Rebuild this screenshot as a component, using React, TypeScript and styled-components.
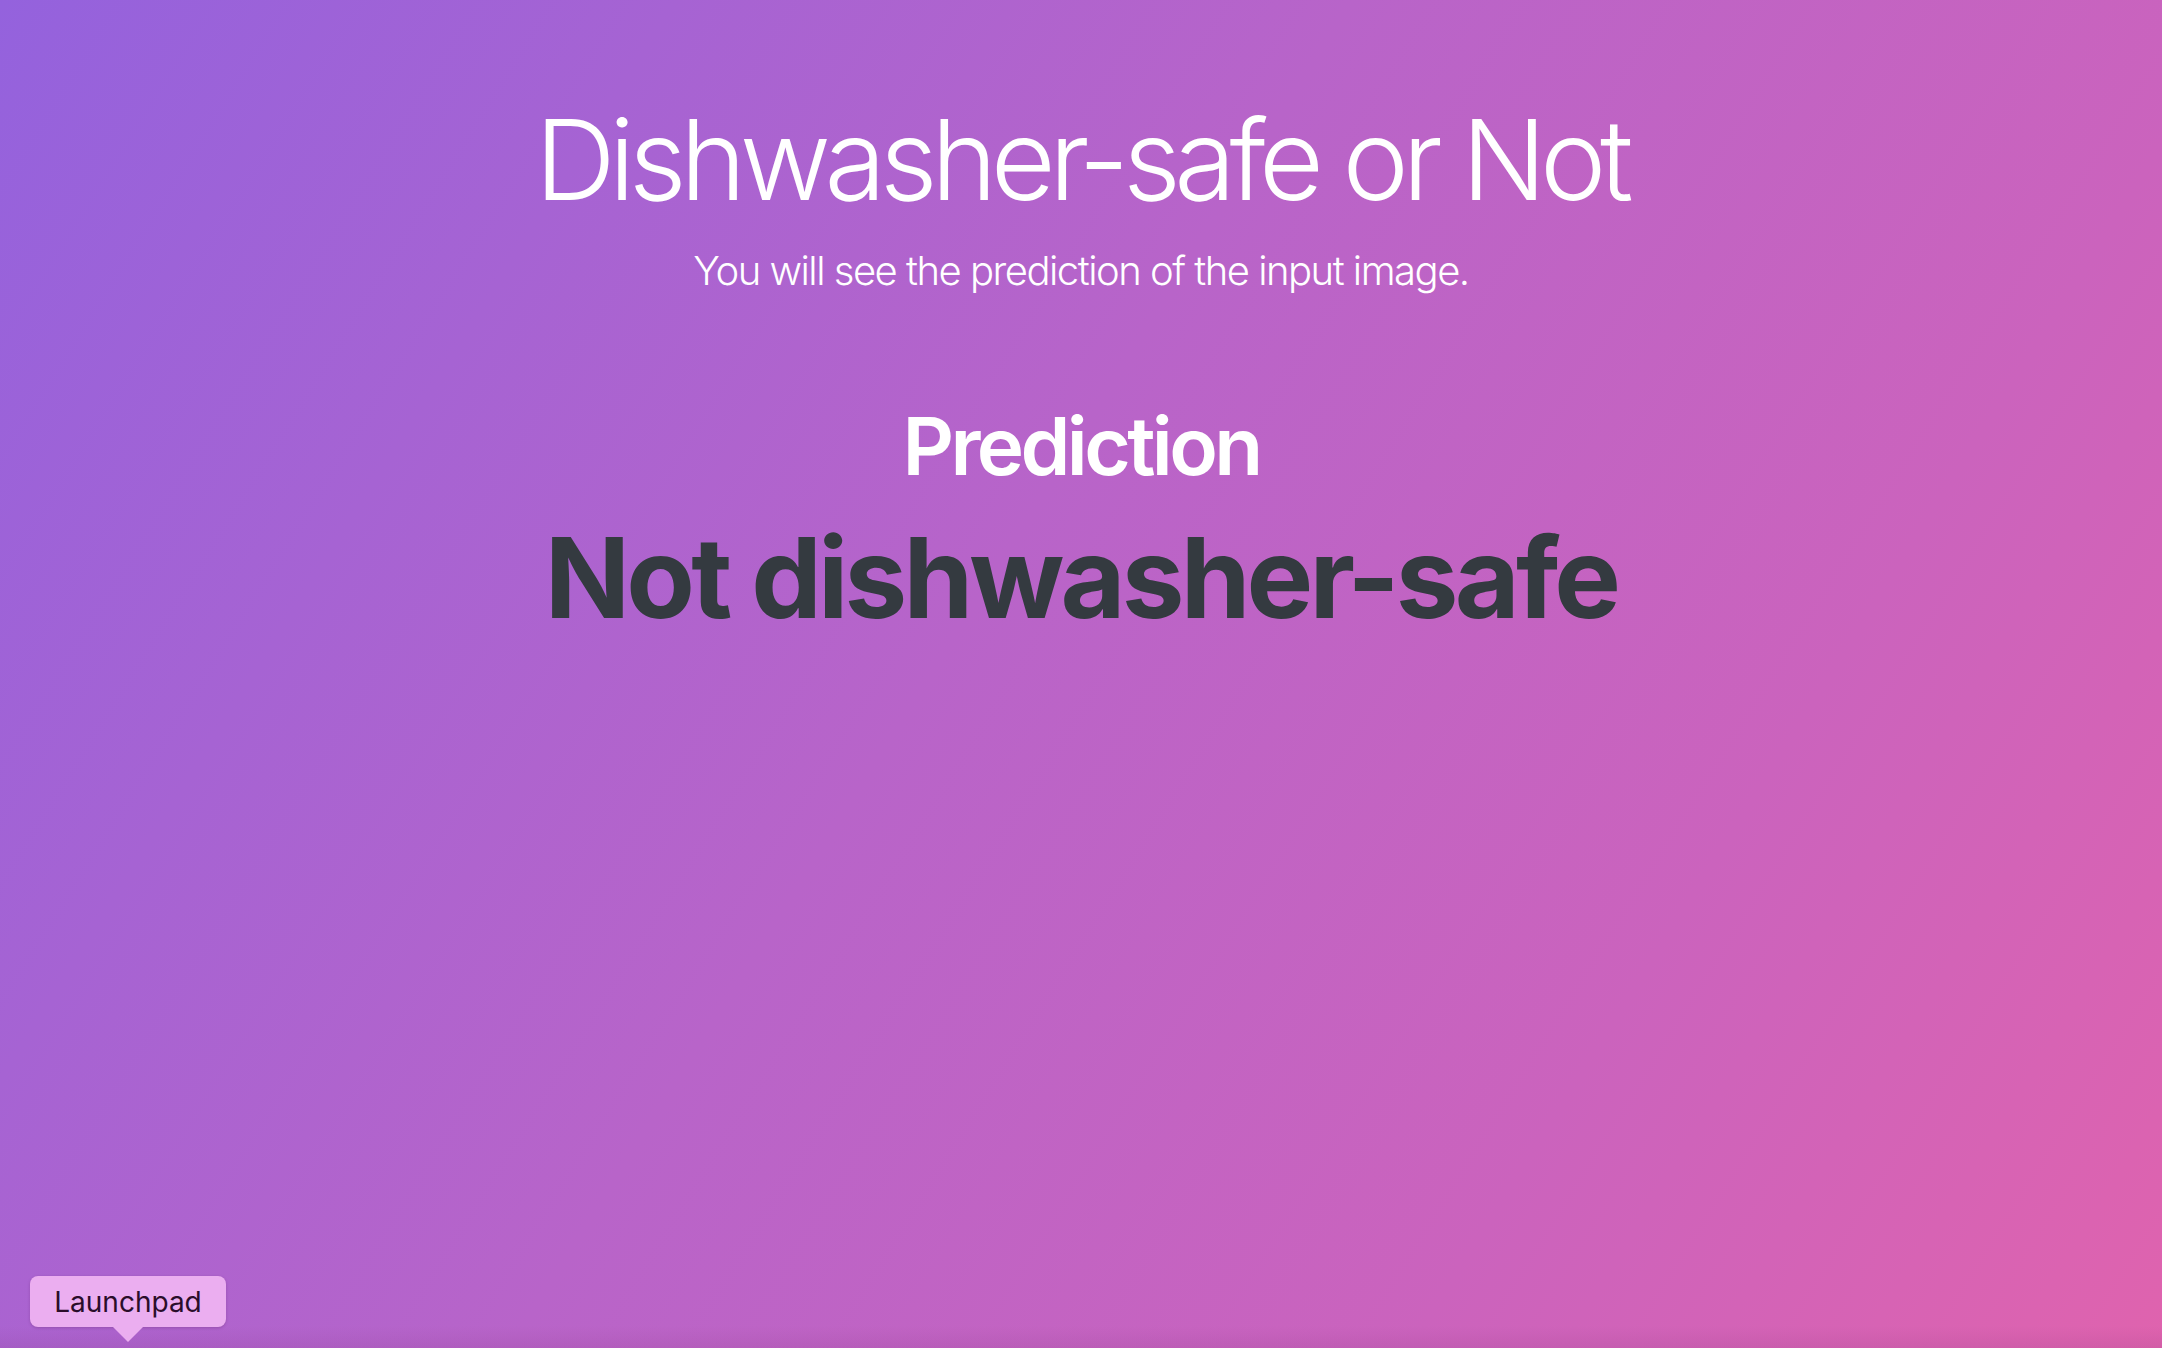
import React from "react";
import styled, { createGlobalStyle } from "styled-components";

const GlobalStyle = createGlobalStyle`
  html, body, #root {
    margin: 0;
    padding: 0;
    width: 100%;
    height: 100%;
  }
  body {
    font-family: Inter, "Noto Sans", "Liberation Sans", sans-serif;
    overflow: hidden;
  }
`;

const Page = styled.main`
  position: relative;
  width: 2162px;
  height: 1348px;
  background: linear-gradient(122deg, #9462dd 0%, #b864c9 45%, #cb63bd 75%, #df63ae 100%);
  display: flex;
  flex-direction: column;
  align-items: center;
  padding-top: 92px;
  box-sizing: border-box;
  overflow: hidden;
  &::after {
    content: "";
    position: absolute;
    left: 0;
    right: 0;
    bottom: 0;
    height: 22px;
    background: linear-gradient(to bottom, rgba(120, 40, 110, 0), rgba(120, 40, 110, 0.12));
  }
`;

const Title = styled.h1`
  margin: 0 0 15px;
  font-size: 112px;
  font-weight: 300;
  line-height: 1.2;
  color: #ffffff;
  letter-spacing: -6.4px;
`;

const Lead = styled.p`
  margin: 0 0 97px;
  font-size: 40px;
  font-weight: 300;
  line-height: 1.5;
  color: #ffffff;
  letter-spacing: -1.5px;
`;

const SectionHeading = styled.h2`
  margin: 0 0 16px;
  font-size: 80px;
  font-weight: 600;
  line-height: 1.2;
  color: #ffffff;
  letter-spacing: -3.6px;
`;

const Result = styled.h3`
  margin: 0;
  font-size: 112px;
  font-weight: 700;
  line-height: 1.2;
  color: #343a40;
  letter-spacing: -3.8px;
`;

const Tooltip = styled.div`
  position: absolute;
  left: 30px;
  top: 1276px;
  width: 196px;
  height: 51px;
  box-sizing: border-box;
  border-radius: 8px;
  background: #ebaef0;
  box-shadow: 0 1px 3px rgba(80, 20, 80, 0.25);
  display: flex;
  align-items: center;
  justify-content: center;
  font-family: Inter, "Liberation Sans", sans-serif;
  font-size: 28px;
  font-weight: 400;
  color: #2a0d2a;
  z-index: 2;
  &::after {
    content: "";
    position: absolute;
    left: 50%;
    bottom: -15px;
    transform: translateX(-50%);
    width: 0;
    height: 0;
    border-left: 15px solid transparent;
    border-right: 15px solid transparent;
    border-top: 15px solid #ebaef0;
  }
`;

export default function App() {
  return (
    <>
      <GlobalStyle />
      <Page>
        <Title>Dishwasher-safe or Not</Title>
        <Lead>You will see the prediction of the input image.</Lead>
        <SectionHeading>Prediction</SectionHeading>
        <Result>Not dishwasher-safe</Result>
        <Tooltip>Launchpad</Tooltip>
      </Page>
    </>
  );
}
